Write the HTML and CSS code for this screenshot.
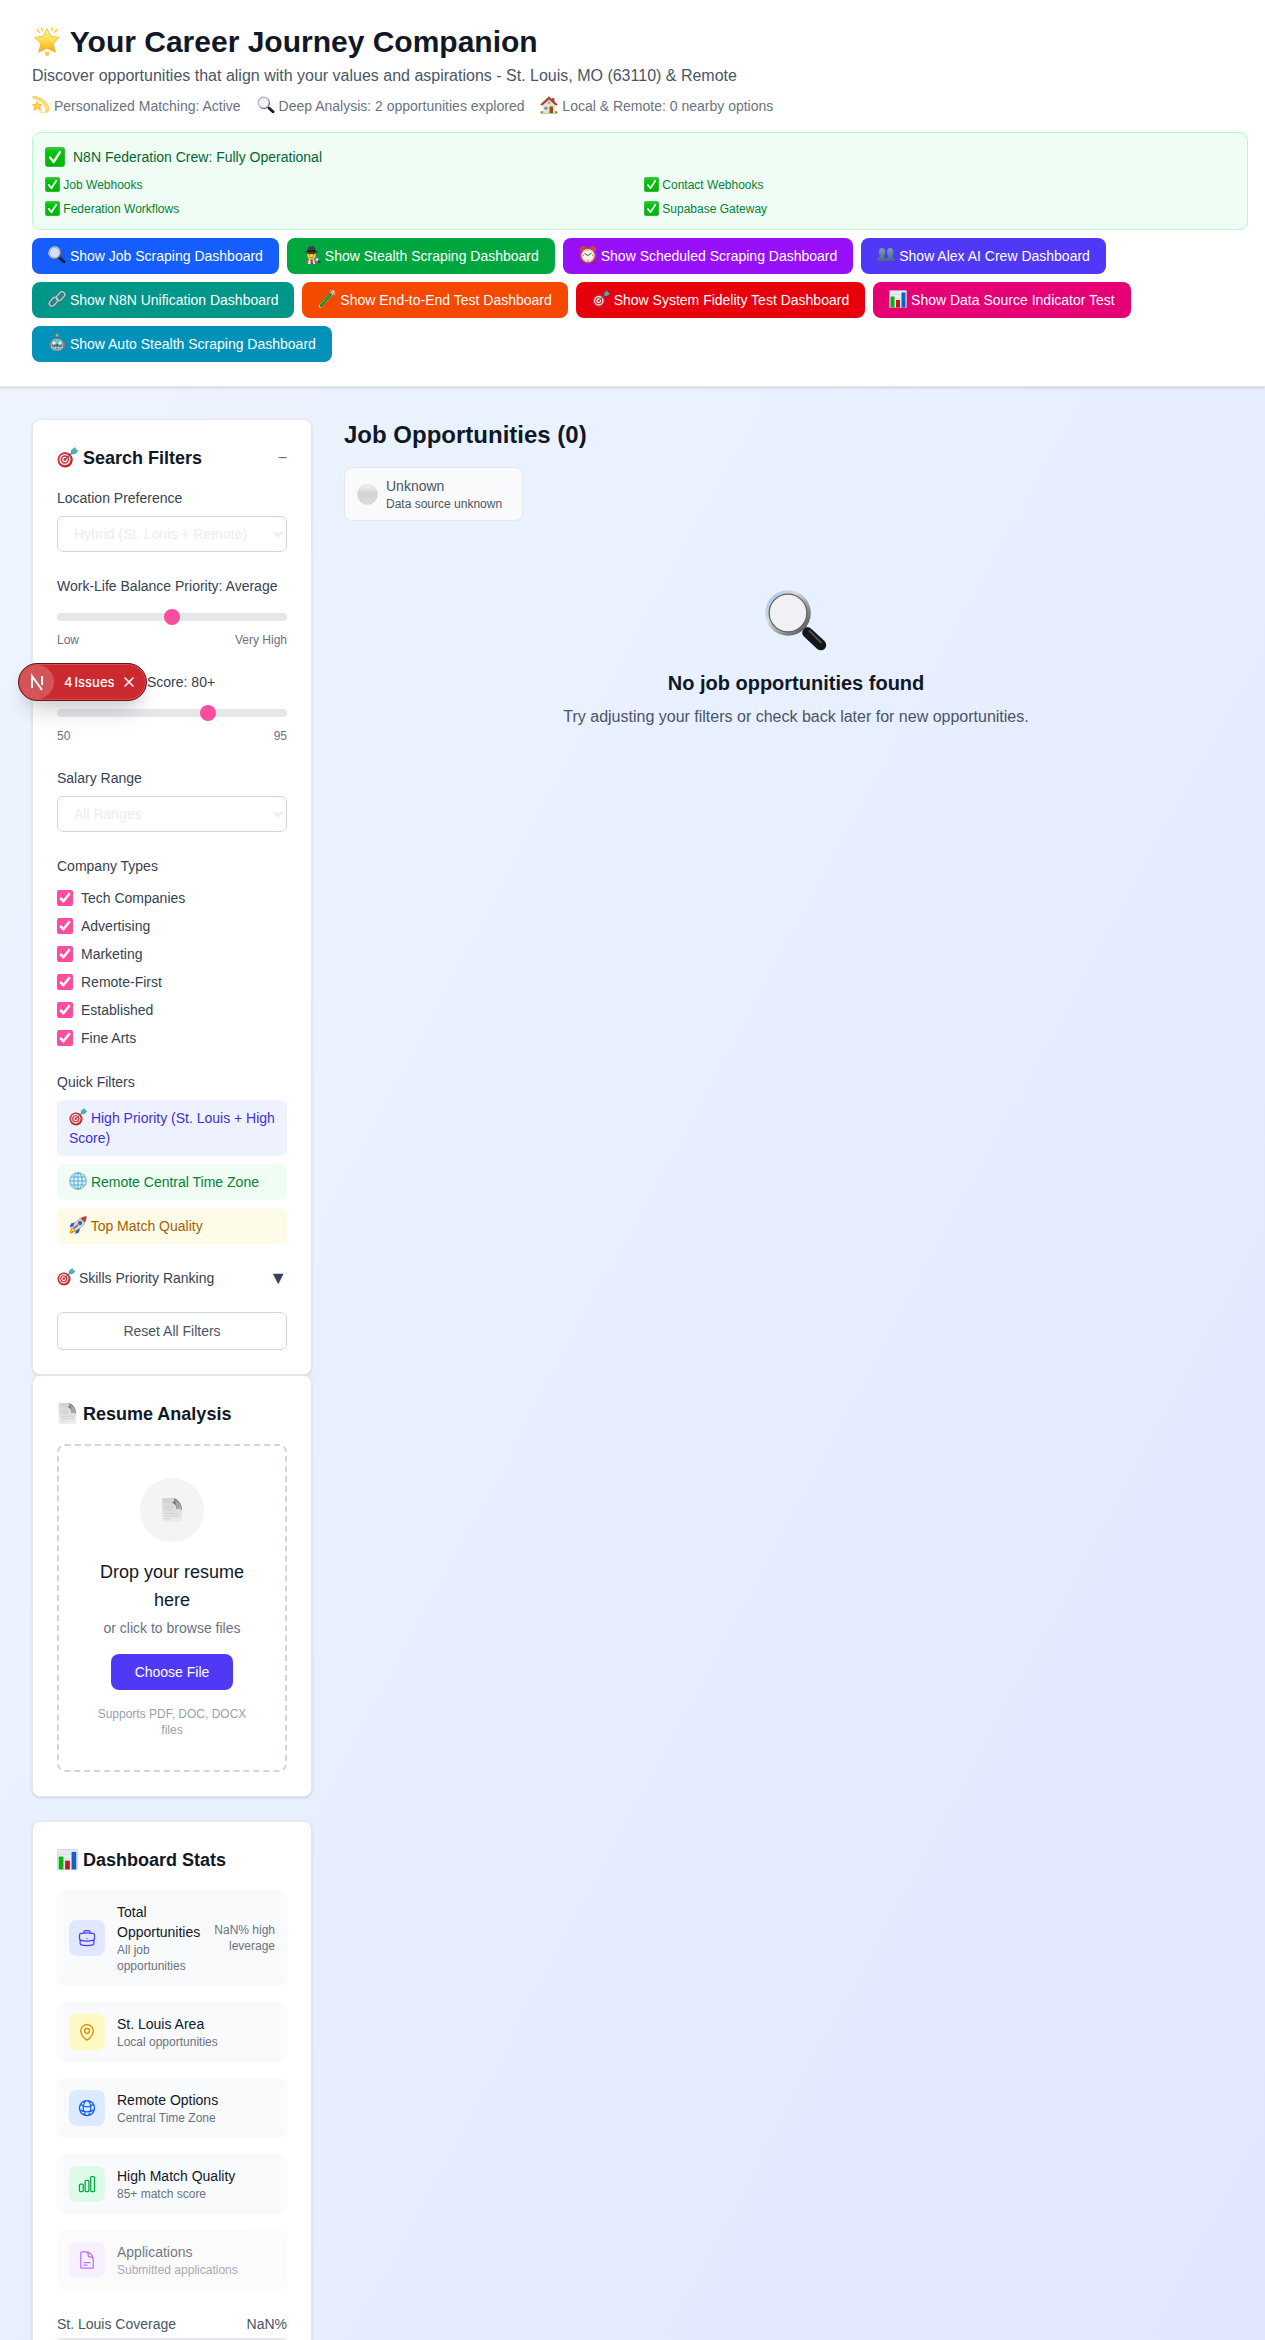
FILE: index.html
```html
<!DOCTYPE html>
<html lang="en">
<head>
<meta charset="utf-8">
<meta name="viewport" content="width=device-width, initial-scale=1">
<title>Your Career Journey Companion</title>
<link rel="stylesheet" href="styles.css">
</head>
<body>
<svg class="sprite" aria-hidden="true">
  <defs>
    <linearGradient id="g-star" x1="0" y1="0" x2="0" y2="1"><stop offset="0" stop-color="#fff3a0"/><stop offset=".5" stop-color="#ffdf4a"/><stop offset="1" stop-color="#f9a61f"/></linearGradient>
    <linearGradient id="g-green" x1="0" y1="0" x2="0" y2="1"><stop offset="0" stop-color="#37cf3c"/><stop offset=".25" stop-color="#00c40a"/><stop offset="1" stop-color="#00b40a"/></linearGradient>
    <linearGradient id="g-grey" x1="0" y1="0" x2="0" y2="1"><stop offset="0" stop-color="#f3f3f3"/><stop offset=".45" stop-color="#d3d3d3"/><stop offset="1" stop-color="#dcdcdc"/></linearGradient>
    <linearGradient id="g-rim" x1="0" y1="0" x2="1" y2="1"><stop offset="0" stop-color="#9cc4ea"/><stop offset=".35" stop-color="#d9dadd"/><stop offset="1" stop-color="#4a4a4a"/></linearGradient>
    <linearGradient id="g-page" x1="0" y1="0" x2="0" y2="1"><stop offset="0" stop-color="#d3d3d3"/><stop offset="1" stop-color="#ededed"/></linearGradient>
    <linearGradient id="g-people" x1="0" y1="0" x2="0" y2="1"><stop offset="0" stop-color="#7c9bb6"/><stop offset="1" stop-color="#4a6883"/></linearGradient>
    <symbol id="e-star" viewBox="0 0 36 36">
      <g fill="#ffd23c"><path d="M5 3q4 1 5 6Q6 8 5 3zM11 1q3 2 2 6Q10 5 11 1zM31 3q-4 1-5 6 4-1 5-6zM25 1q-3 2-2 6 3-2 2-6zM15 31h6l-1 4q-2 2-4 0z"/></g>
      <path d="M18 3l4.600 9.200L33 13.700l-7.500 7.300 2.500 10.500L18 26.600 8 31.500l2.500-10.500L3 13.700l10.400-1.500z" fill="url(#g-star)" stroke="#f5a623" stroke-width=".8" stroke-linejoin="round"/>
    </symbol>
    <symbol id="e-dizzy" viewBox="0 0 36 36">
      <path d="M1 1c16-1 32 12 33 24 0 5-2 8-5 8 2-9-8-26-28-32z" fill="#ffe07a" stroke="#efaa2a" stroke-width="1"/>
      <path d="M1 3c18 4 30 18 26 29-3 3-8 2-12 0 8-4 2-19-14-29z" fill="#fffbe9" stroke="#f3b93c"/>
      <path d="M10 11l3 6 6 0-4 5 2 6-7-3-6 4 1-7-4-5 7-1z" fill="#ffd23c" stroke="#e8981e"/>
    </symbol>
    <symbol id="e-magnify" viewBox="0 0 36 36">
      <path d="M21 21l3 2" stroke="#777" stroke-width="3"/>
      <path d="M24.500 24.500l7.500 7" stroke="#161718" stroke-width="6" stroke-linecap="round"/>
      <path d="M25.500 23.500l6.500 6.500" stroke="#55575a" stroke-width="1" stroke-linecap="round"/>
      <circle cx="13.500" cy="13.500" r="11.700" fill="#f0f0f3" fill-opacity=".88" stroke="url(#g-rim)" stroke-width="2.200"/>
      <circle cx="13.500" cy="13.500" r="10.600" fill="none" stroke="#5d6063" stroke-width=".7"/>
    </symbol>
    <symbol id="e-house" viewBox="0 0 36 36">
      <path d="M1 31q17-4 34 0v4H1z" fill="#6aa233"/>
      <path d="M6 16L18 5l12 11v18H6z" fill="#f4dfb6"/><path d="M24 4h5v9l-5-5z" fill="#a45d45"/>
      <path d="M18 1L1 17l3 2L18 7l14 12 3-2z" fill="#a9432f" stroke="#823021" stroke-width=".6"/>
      <path d="M19 21h7v13h-7z" fill="#8c4d2a"/><path d="M8 21h8v7H8z" fill="#5f9bc8" stroke="#fff"/><circle cx="18" cy="13.500" r="3" fill="#5f9bc8" stroke="#fff"/>
    </symbol>
    <symbol id="e-check" viewBox="0 0 36 36">
      <rect x=".7" y=".7" width="34.600" height="34.600" rx="5" fill="url(#g-green)" stroke="#20a32b" stroke-width="1.400"/>
      <path d="M9 19l6.500 8L27 9" fill="none" stroke="#fff" stroke-width="4.200" stroke-linecap="round" stroke-linejoin="round"/>
    </symbol>
    <symbol id="e-detective" viewBox="0 0 36 36">
      <path d="M5 36c0-9 5-11 12-11s12 2 12 11z" fill="#71726e"/><path d="M12 25l5 7 5-7 2 11H10z" fill="#e9e7df"/><path d="M16 28h3l1 8h-5z" fill="#a3382d"/>
      <ellipse cx="17" cy="18" rx="8.500" ry="9" fill="#ffcb32"/><path d="M9 13h16v3H9z" fill="#5a3a1c"/>
      <path d="M3 12c4 3 24 3 28 0-1-2-5-2-6-3-1-8-3-9-8-8-5-1-7 0-8 8-1 1-5 1-6 3z" fill="#3b3d40"/><path d="M9 8q8 3 16 0v3q-8 2-16 0z" fill="#15171a"/>
      <path d="M13 22q4 3 8 0" stroke="#8b4b14" fill="none" stroke-width="1.300"/><circle cx="13.500" cy="17.500" r="1.200" fill="#4b2b12"/><circle cx="20.500" cy="17.500" r="1.200" fill="#4b2b12"/>
      <circle cx="28" cy="27" r="4" fill="#bfe5f1" stroke="#596167" stroke-width="1.500"/><path d="M31 30l4 4" stroke="#26323a" stroke-width="2.500"/>
    </symbol>
    <symbol id="e-clock" viewBox="0 0 36 36">
      <path d="M7 31l-3 4M29 31l3 4" stroke="#9b2525" stroke-width="3" stroke-linecap="round"/><path d="M2 10a7 7 0 0 1 12-7zM34 10A7 7 0 0 0 22 3z" fill="#d8453f"/><path d="M15 2h6" stroke="#a33" stroke-width="2"/>
      <circle cx="18" cy="19" r="14.500" fill="#fff" stroke="#c8443f" stroke-width="2.600"/><circle cx="18" cy="19" r="12" fill="#f9f4e8" stroke="#8d8580" stroke-width="1"/>
      <path d="M18 19l-7-4M18 19l7-5" stroke="#222" stroke-width="1.600"/><path d="M18 9v2M18 27v2M8 19h2M26 19h2" stroke="#444" stroke-width="1.300"/>
    </symbol>
    <symbol id="e-people" viewBox="0 0 36 36">
      <g fill="url(#g-people)"><path d="M26 4c5 0 7 4 6.500 9-.5 4-2 6-2 8 0 3 5 3 5.500 9H17c0-6 5-6 5-9 0-2-2-4-2-8 0-5 2-9 6-9z"/><path d="M10 4c5 0 7 4 6.500 9-.5 4-2 6-2 8 0 3 5 3 5.500 9H0c0-6 5.500-6 5.500-9 0-2-2-4-2-8C3.500 8 5 4 10 4z" stroke="#4b5f9f" stroke-width=".8"/></g>
    </symbol>
    <symbol id="e-link" viewBox="0 0 36 36">
      <g fill="none" stroke-linecap="round"><g stroke="#59646b" stroke-width="4.600"><rect x="15" y="7" width="20" height="11" rx="5.500" transform="rotate(-48 25 12.500)"/><rect x="1" y="18" width="20" height="11" rx="5.500" transform="rotate(-48 11 23.500)"/></g><g stroke="#c4cdd2" stroke-width="2.600"><rect x="15" y="7" width="20" height="11" rx="5.500" transform="rotate(-48 25 12.500)"/><rect x="1" y="18" width="20" height="11" rx="5.500" transform="rotate(-48 11 23.500)"/></g></g>
    </symbol>
    <symbol id="e-tube" viewBox="0 0 36 36">
      <path d="M30 4L5 32" stroke="#dce8e6" stroke-width="6.500" stroke-linecap="round"/><path d="M25 9L6 31" stroke="#138a26" stroke-width="6" stroke-linecap="round"/><path d="M23 10L6 29" stroke="#45d24c" stroke-width="1.500"/><path d="M25 1l9 8" stroke="#b5a59c" stroke-width="2.500" stroke-linecap="round"/>
    </symbol>
    <symbol id="e-target" viewBox="0 0 36 36">
      <circle cx="14" cy="22" r="13" fill="#a82028"/><circle cx="13.500" cy="21.500" r="12" fill="#d8343b"/><circle cx="13.500" cy="21.500" r="9.500" fill="#f5eeee"/><circle cx="13.500" cy="21.500" r="7.200" fill="#cf2d35"/><circle cx="13.500" cy="21.500" r="4.800" fill="#f5eeee"/><circle cx="13.500" cy="21.500" r="2.500" fill="#cf2d35"/>
      <path d="M14 21L27 9" stroke="#48656e" stroke-width="2"/><path d="M24 11l1-6 6-4 1 4 4 1-4 5-6 1z" fill="#43b5bd" stroke="#2b7d8b" stroke-width=".8"/>
    </symbol>
    <symbol id="e-chart" viewBox="0 0 36 36">
      <path d="M1 1h34v34H1z" fill="#e4edf2" stroke="#b8c4cb"/><path d="M1 9h34M1 17h34M1 26h34" stroke="#cbd6dd"/><path d="M3 13h8v22H3z" fill="#08b20c"/><path d="M14 20h8v15h-8z" fill="#c5141b"/><path d="M25 5h8v30h-8z" fill="#1260c3"/>
    </symbol>
    <symbol id="e-robot" viewBox="0 0 36 36">
      <circle cx="18" cy="3" r="2.800" fill="#f2a12d"/><path d="M17 5h2v5h-2z" fill="#7f4940"/><path d="M2 17h5v9H2zM29 17h5v9h-5z" fill="#e0564b"/><path d="M6 15C8 7 28 7 30 15l1 12c-2 9-24 9-26 0z" fill="#9db6be" stroke="#55707a"/>
      <path d="M8 20c0 13 20 13 20 0z" fill="#506b75"/><circle cx="12" cy="18" r="4.200" fill="#e8ffff" stroke="#35a6bd" stroke-width="1.500"/><circle cx="24" cy="18" r="4.200" fill="#e8ffff" stroke="#35a6bd" stroke-width="1.500"/><path d="M11 27h14" stroke="#e9eded" stroke-width="3" stroke-dasharray="2 1"/>
    </symbol>
    <symbol id="e-globe" viewBox="0 0 36 36">
      <circle cx="18" cy="18" r="16.500" fill="#d9f1fb"/><g fill="none" stroke="#4a9fc9" stroke-width="1.700"><circle cx="18" cy="18" r="16.500"/><ellipse cx="18" cy="18" rx="8.500" ry="16.500"/><path d="M18 1.500v33M1.500 18h33M4 10h28M4 26h28"/></g>
    </symbol>
    <symbol id="e-rocket" viewBox="0 0 36 36">
      <path d="M1 34l4-12 9 9-10 4z" fill="#f98a18"/><path d="M4 31l4-8 5 5z" fill="#ffe14d"/><path d="M12 13l-8 2-3 8 9-3zM22 24l-2 9-8 3 3-9z" fill="#2767b8"/>
      <path d="M35 1C23 1 11 11 7 23l6 6C25 25 35 14 35 1z" fill="#d3dbe2" stroke="#5f6b75" stroke-width=".8"/><path d="M35 1q-8 0-12 4l8 8q4-6 4-12z" fill="#c63b3b"/><circle cx="22" cy="14" r="3.500" fill="#2f6fb5" stroke="#1d3957" stroke-width="1.200"/><path d="M9 25l9-7" stroke="#a33" stroke-width="2.500"/>
    </symbol>
    <symbol id="e-page" viewBox="0 0 36 36">
      <path d="M3 0h18q12 5 12 17v19H3z" fill="url(#g-page)"/><path d="M21 0q11 5 12 18-4-3-8-1 0-8-7-10 5-2 3-7z" fill="#757575"/><path d="M19 1q6 3 6 15l8 1Q31 6 19 1z" fill="#a9a9a9"/><path d="M7 6h8M7 14h12M7 18h12M7 23h22M7 27h22M7 31h8" stroke="#c4c4c4"/>
    </symbol>
    <symbol id="e-circle" viewBox="0 0 36 36"><circle cx="18" cy="18" r="17" fill="url(#g-grey)" stroke="#cfcfcf"/></symbol>
  </defs>
</svg>

<div class="app">
  <header class="header">
    <h1 class="header__title"><svg class="emoji emoji--xl" aria-hidden="true"><use href="#e-star"/></svg> Your Career Journey Companion</h1>
    <p class="header__lead">Discover opportunities that align with your values and aspirations - St. Louis, MO (63110) &amp; Remote</p>
    <div class="facts">
      <span><svg class="emoji" aria-hidden="true"><use href="#e-dizzy"/></svg> Personalized Matching: Active</span>
      <span><svg class="emoji" aria-hidden="true"><use href="#e-magnify"/></svg> Deep Analysis: 2 opportunities explored</span>
      <span><svg class="emoji" aria-hidden="true"><use href="#e-house"/></svg> Local &amp; Remote: 0 nearby options</span>
    </div>
    <section class="status">
      <div class="status__head"><svg class="emoji emoji--status" aria-hidden="true"><use href="#e-check"/></svg><span>N8N Federation Crew: Fully Operational</span></div>
      <div class="status__grid">
        <div><svg class="emoji emoji--sm" aria-hidden="true"><use href="#e-check"/></svg> Job Webhooks</div>
        <div><svg class="emoji emoji--sm" aria-hidden="true"><use href="#e-check"/></svg> Contact Webhooks</div>
        <div><svg class="emoji emoji--sm" aria-hidden="true"><use href="#e-check"/></svg> Federation Workflows</div>
        <div><svg class="emoji emoji--sm" aria-hidden="true"><use href="#e-check"/></svg> Supabase Gateway</div>
      </div>
    </section>
    <div class="actions">
      <button type="button" class="btn btn--blue"><svg class="emoji" aria-hidden="true"><use href="#e-magnify"/></svg> Show Job Scraping Dashboard</button>
      <button type="button" class="btn btn--green"><svg class="emoji" aria-hidden="true"><use href="#e-detective"/></svg> Show Stealth Scraping Dashboard</button>
      <button type="button" class="btn btn--purple"><svg class="emoji" aria-hidden="true"><use href="#e-clock"/></svg> Show Scheduled Scraping Dashboard</button>
      <button type="button" class="btn btn--indigo"><svg class="emoji" aria-hidden="true"><use href="#e-people"/></svg> Show Alex AI Crew Dashboard</button>
      <button type="button" class="btn btn--teal"><svg class="emoji" aria-hidden="true"><use href="#e-link"/></svg> Show N8N Unification Dashboard</button>
      <button type="button" class="btn btn--orange"><svg class="emoji" aria-hidden="true"><use href="#e-tube"/></svg> Show End-to-End Test Dashboard</button>
      <button type="button" class="btn btn--red"><svg class="emoji" aria-hidden="true"><use href="#e-target"/></svg> Show System Fidelity Test Dashboard</button>
      <button type="button" class="btn btn--pink"><svg class="emoji" aria-hidden="true"><use href="#e-chart"/></svg> Show Data Source Indicator Test</button>
      <button type="button" class="btn btn--cyan"><svg class="emoji" aria-hidden="true"><use href="#e-robot"/></svg> Show Auto Stealth Scraping Dashboard</button>
    </div>
  </header>

  <div class="layout">
    <aside class="sidebar">
      <section class="card filters">
        <div class="card__head">
          <h2 class="card__title"><svg class="emoji emoji--lg" aria-hidden="true"><use href="#e-target"/></svg> Search Filters</h2>
          <button type="button" class="collapse" aria-label="Collapse filters">−</button>
        </div>
        <div class="field">
          <label for="location">Location Preference</label>
          <select id="location"><option>Hybrid (St. Louis + Remote)</option></select>
        </div>
        <div class="field">
          <label for="balance">Work-Life Balance Priority: Average</label>
          <input id="balance" type="range" min="1" max="5" value="3">
          <div class="scale"><span>Low</span><span>Very High</span></div>
        </div>
        <div class="field">
          <label for="score" class="field__label--beside-badge">Score: 80+</label>
          <input id="score" type="range" min="50" max="95" step="5" value="80">
          <div class="scale"><span>50</span><span>95</span></div>
        </div>
        <div class="field">
          <label for="salary">Salary Range</label>
          <select id="salary"><option>All Ranges</option></select>
        </div>
        <fieldset class="types">
          <legend>Company Types</legend>
          <label><input type="checkbox" checked> Tech Companies</label>
          <label><input type="checkbox" checked> Advertising</label>
          <label><input type="checkbox" checked> Marketing</label>
          <label><input type="checkbox" checked> Remote-First</label>
          <label><input type="checkbox" checked> Established</label>
          <label><input type="checkbox" checked> Fine Arts</label>
        </fieldset>
        <div class="quick">
          <h3 class="quick__title">Quick Filters</h3>
          <button type="button" class="quick__btn quick__btn--indigo"><svg class="emoji" aria-hidden="true"><use href="#e-target"/></svg> High Priority (St. Louis + High Score)</button>
          <button type="button" class="quick__btn quick__btn--green"><svg class="emoji" aria-hidden="true"><use href="#e-globe"/></svg> Remote Central Time Zone</button>
          <button type="button" class="quick__btn quick__btn--yellow"><svg class="emoji" aria-hidden="true"><use href="#e-rocket"/></svg> Top Match Quality</button>
        </div>
        <button type="button" class="skills"><span><svg class="emoji" aria-hidden="true"><use href="#e-target"/></svg> Skills Priority Ranking</span><span class="skills__arrow">▼</span></button>
        <button type="button" class="reset">Reset All Filters</button>
      </section>

      <section class="card">
        <h2 class="card__title"><svg class="emoji emoji--lg" aria-hidden="true"><use href="#e-page"/></svg> Resume Analysis</h2>
        <div class="drop">
          <div class="drop__icon"><svg class="emoji emoji--drop" aria-hidden="true"><use href="#e-page"/></svg></div>
          <p class="drop__title">Drop your resume here</p>
          <p class="drop__text">or click to browse files</p>
          <button type="button" class="btn btn--indigo btn--file">Choose File</button>
          <p class="drop__note">Supports PDF, DOC, DOCX files</p>
        </div>
      </section>

      <section class="card card--stats">
        <h2 class="card__title"><svg class="emoji emoji--lg" aria-hidden="true"><use href="#e-chart"/></svg> Dashboard Stats</h2>
        <ul class="stats">
          <li class="stat">
            <span class="stat__icon stat__icon--indigo"><svg viewBox="0 0 24 24"><path d="M20.250 14.150v4.250c0 1.094-.787 2.036-1.872 2.180-2.087.277-4.216.42-6.378.42s-4.291-.143-6.378-.42c-1.085-.144-1.872-1.086-1.872-2.180v-4.250m16.500 0a2.180 2.180 0 0 0 .75-1.661V8.706c0-1.081-.768-2.015-1.837-2.175a48.114 48.114 0 0 0-3.413-.387m4.500 8.006c-.194.165-.42.295-.673.38A23.978 23.978 0 0 1 12 15.750c-2.648 0-5.195-.429-7.577-1.220a2.016 2.016 0 0 1-.673-.38m0 0A2.180 2.180 0 0 1 3 12.489V8.706c0-1.081.768-2.015 1.837-2.175a48.111 48.111 0 0 1 3.413-.387m7.500 0V5.250A2.250 2.250 0 0 0 13.500 3h-3a2.250 2.250 0 0 0-2.250 2.250v.894m7.500 0a48.667 48.667 0 0 0-7.500 0M12 12.750h.008v.008H12v-.008Z"/></svg></span>
            <div><p class="stat__name">Total Opportunities</p><p class="stat__sub">All job opportunities</p></div>
            <p class="stat__extra">NaN% high leverage</p>
          </li>
          <li class="stat">
            <span class="stat__icon stat__icon--yellow"><svg viewBox="0 0 24 24"><path d="M15 10.500a3 3 0 1 1-6 0 3 3 0 0 1 6 0Z"/><path d="M19.500 10.500c0 7.142-7.500 11.250-7.500 11.250S4.500 17.642 4.500 10.500a7.500 7.500 0 1 1 15 0Z"/></svg></span>
            <div><p class="stat__name">St. Louis Area</p><p class="stat__sub">Local opportunities</p></div>
          </li>
          <li class="stat">
            <span class="stat__icon stat__icon--blue"><svg viewBox="0 0 24 24"><path d="M12 21a9.004 9.004 0 0 0 8.716-6.747M12 21a9.004 9.004 0 0 1-8.716-6.747M12 21c2.485 0 4.500-4.030 4.500-9S14.485 3 12 3m0 18c-2.485 0-4.500-4.030-4.500-9S9.515 3 12 3m0 0a8.997 8.997 0 0 1 7.843 4.582M12 3a8.997 8.997 0 0 0-7.843 4.582m15.686 0A11.953 11.953 0 0 1 12 10.500c-2.998 0-5.740-1.100-7.843-2.918m15.686 0A8.959 8.959 0 0 1 21 12c0 .778-.099 1.533-.284 2.253m0 0A17.919 17.919 0 0 1 12 16.500c-3.162 0-6.133-.815-8.716-2.247m0 0A9.015 9.015 0 0 1 3 12c0-1.605.42-3.113 1.157-4.418"/></svg></span>
            <div><p class="stat__name">Remote Options</p><p class="stat__sub">Central Time Zone</p></div>
          </li>
          <li class="stat">
            <span class="stat__icon stat__icon--green"><svg viewBox="0 0 24 24"><path d="M3 13.125C3 12.504 3.504 12 4.125 12h2.250c.621 0 1.125.504 1.125 1.125v6.750C7.500 20.496 6.996 21 6.375 21h-2.250A1.125 1.125 0 0 1 3 19.875v-6.750ZM9.750 8.625c0-.621.504-1.125 1.125-1.125h2.250c.621 0 1.125.504 1.125 1.125v11.250c0 .621-.504 1.125-1.125 1.125h-2.250a1.125 1.125 0 0 1-1.125-1.125V8.625ZM16.500 4.125c0-.621.504-1.125 1.125-1.125h2.250C20.496 3 21 3.504 21 4.125v15.750c0 .621-.504 1.125-1.125 1.125h-2.250a1.125 1.125 0 0 1-1.125-1.125V4.125Z"/></svg></span>
            <div><p class="stat__name">High Match Quality</p><p class="stat__sub">85+ match score</p></div>
          </li>
          <li class="stat stat--entering">
            <span class="stat__icon stat__icon--purple"><svg viewBox="0 0 24 24"><path d="M19.500 14.250v-2.625a3.375 3.375 0 0 0-3.375-3.375h-1.500A1.125 1.125 0 0 1 13.500 7.125v-1.500a3.375 3.375 0 0 0-3.375-3.375H8.250m0 12.750h7.500m-7.500 3H12M10.500 2.250H5.625c-.621 0-1.125.504-1.125 1.125v17.250c0 .621.504 1.125 1.125 1.125h12.750c.621 0 1.125-.504 1.125-1.125V11.250a9 9 0 0 0-9-9Z"/></svg></span>
            <div><p class="stat__name">Applications</p><p class="stat__sub">Submitted applications</p></div>
          </li>
        </ul>
        <div class="coverage">
          <div class="coverage__row"><span>St. Louis Coverage</span><span>NaN%</span></div>
          <div class="coverage__bar"></div>
        </div>
      </section>
    </aside>

    <main class="main">
      <h2 class="main__title">Job Opportunities (0)</h2>
      <div class="source">
        <svg class="emoji emoji--source" aria-hidden="true"><use href="#e-circle"/></svg>
        <div><p class="source__name">Unknown</p><p class="source__text">Data source unknown</p></div>
      </div>
      <section class="empty">
        <svg class="emoji emoji--empty" aria-hidden="true"><use href="#e-magnify"/></svg>
        <h3 class="empty__title">No job opportunities found</h3>
        <p class="empty__text">Try adjusting your filters or check back later for new opportunities.</p>
      </section>
    </main>
  </div>

  <div class="issues">
    <span class="issues__logo"><svg viewBox="0 0 34 34" aria-hidden="true"><path d="M12 23V11L22 25M22 11v9" fill="none" stroke="#fff" stroke-width="2"/></svg></span>
    <button type="button" class="issues__open"><span>4</span><span>Issues</span></button>
    <button type="button" class="issues__close" aria-label="Dismiss"><svg viewBox="0 0 12 12" aria-hidden="true"><path d="M2 2l8 8M10 2l-8 8" stroke="#fff" stroke-width="1.500" stroke-linecap="round"/></svg></button>
  </div>
</div>
</body>
</html>
```
FILE: styles.css
```css
*, *::before, *::after { box-sizing: border-box; }
body, h1, h2, h3, p, ul, fieldset { margin: 0; padding: 0; }
body {
  font-family: "Liberation Sans", Arial, Helvetica, sans-serif;
  font-size: 14px;
  line-height: 20px;
  color: #101828;
}
button, select, input { font: inherit; color: inherit; margin: 0; }
button { border: 0; background: none; padding: 0; cursor: pointer; }
.sprite { position: absolute; width: 0; height: 0; }

.emoji { width: 18px; height: 18px; vertical-align: -3px; flex: none; }
.emoji--sm { width: 15px; height: 15px; }
.emoji--status { width: 20px; height: 20px; }
.emoji--source { width: 21px; height: 21px; }
.emoji--lg { width: 21px; height: 21px; vertical-align: -4px; }
.emoji--drop { width: 24px; height: 24px; }
.emoji--xl { width: 30px; height: 30px; vertical-align: -4px; }
.emoji--empty { width: 64px; height: 64px; }

.app {
  position: relative;
  height: 100vh;
  overflow: hidden;
  background: linear-gradient(to bottom right, #eff6ff, #e0e7ff);
}

/* Header */
.header {
  padding: 24px 17px 24px 32px;
  background: #fff;
  border-bottom: 1px solid #e5e7eb;
  box-shadow: 0 1px 3px rgba(0, 0, 0, .1), 0 1px 2px -1px rgba(0, 0, 0, .1);
}
.header__title { font-size: 30px; line-height: 36px; }
.header__lead { margin-top: 4px; font-size: 16px; line-height: 24px; color: #4a5565; }
.facts { display: flex; flex-wrap: wrap; gap: 16px; margin-top: 8px; color: #6a7282; }

.status {
  margin-top: 16px;
  padding: 12px;
  border: 1px solid #b9f8cf;
  border-radius: 8px;
  background: #f0fdf4;
}
.status__head { display: flex; align-items: center; gap: 8px; height: 24px; margin-bottom: 8px; color: #016630; }
.status__grid { display: grid; grid-template-columns: 1fr 1fr; gap: 8px; font-size: 12px; line-height: 16px; color: #008236; }
.status__grid div { height: 16px; }

.actions { display: flex; flex-wrap: wrap; gap: 8px; margin-top: 8px; }
.btn { height: 36px; padding: 0 16px; border-radius: 8px; color: #fff; white-space: nowrap; }
.btn--blue { background: #155dfc; }
.btn--green { background: #00a63e; }
.btn--purple { background: #9810fa; }
.btn--indigo { background: #4f39f6; }
.btn--teal { background: #009689; }
.btn--orange { background: #f54900; }
.btn--red { background: #e7000b; }
.btn--pink { background: #e60076; }
.btn--cyan { background: #0092b8; }
.btn--file { padding: 0 24px; }

/* Page columns */
.layout {
  display: grid;
  grid-template-columns: 280px minmax(0, 1fr);
  gap: 32px;
  padding: 32px 17px 32px 32px;
}
.card {
  padding: 24px;
  background: #fff;
  border: 1px solid #e5e7eb;
  border-radius: 8px;
  box-shadow: 0 1px 3px rgba(0, 0, 0, .1), 0 1px 2px -1px rgba(0, 0, 0, .1);
}
.card--stats { margin-top: 24px; }
.card__head { display: flex; justify-content: space-between; align-items: center; }
.card__title { font-size: 18px; line-height: 28px; height: 28px; }
.collapse { font-size: 16px; line-height: 24px; color: #6a7282; }

/* Filters */
.filters { display: flex; flex-direction: column; gap: 24px; }
.filters .card__head { margin-bottom: -8px; }
.field { color: #364153; }
.field label { display: block; }
.field .field__label--beside-badge { padding-left: 90px; }
.field select {
  display: block;
  width: 100%;
  height: 36px;
  margin-top: 8px;
  padding: 0 12px;
  border: 1px solid #d1d5dc;
  border-radius: 6px;
  background-color: #fff;
  color: #ededed;
}
.field input {
  display: block;
  width: 100%;
  height: 8px;
  margin: 17px 0 11px;
  border-radius: 8px;
  background: #e5e7eb;
  appearance: none;
}
.field input::-webkit-slider-thumb {
  width: 16px;
  height: 16px;
  border-radius: 50%;
  background: #fb4d9d;
  appearance: none;
}
.scale { display: flex; justify-content: space-between; font-size: 12px; line-height: 16px; color: #6a7282; }
.types { display: flex; flex-direction: column; gap: 8px; border: 0; color: #364153; }
.types legend { padding: 0; margin-bottom: 12px; }
.types label { display: flex; align-items: center; gap: 8px; }
.types input { width: 16px; height: 16px; accent-color: #fb4d9d; }
.quick { display: flex; flex-direction: column; gap: 8px; }
.quick__title { font-size: 14px; font-weight: 400; color: #364153; }
.quick__btn { padding: 8px 12px; border-radius: 6px; text-align: left; }
.quick__btn--indigo { background: #eef2ff; color: #432dd7; }
.quick__btn--green { background: #f0fdf4; color: #008236; }
.quick__btn--yellow { background: #fefce8; color: #a65f00; }
.skills { display: flex; justify-content: space-between; height: 20px; color: #364153; }
.skills__arrow { font-size: 18px; }
.reset { height: 38px; border: 1px solid #d1d5dc; border-radius: 6px; color: #4a5565; }

/* Resume upload */
.drop {
  display: flex;
  flex-direction: column;
  align-items: center;
  margin-top: 16px;
  padding: 32px;
  border: 2px dashed #d1d5dc;
  border-radius: 8px;
  text-align: center;
}
.drop__icon { display: grid; place-items: center; width: 64px; height: 64px; margin-bottom: 16px; border-radius: 50%; background: #f3f4f6; }
.drop__title { font-size: 18px; line-height: 28px; }
.drop__text { margin: 4px 0 16px; color: #6a7282; }
.drop__note { margin-top: 16px; font-size: 12px; line-height: 16px; color: #99a1af; }

/* Stats */
.stats { display: flex; flex-direction: column; gap: 16px; margin-top: 16px; list-style: none; }
.stat { display: flex; align-items: center; gap: 12px; padding: 12px; border-radius: 8px; background: #f9fafb; }
.stat--entering { opacity: .6; }
.stat__icon { display: grid; place-items: center; flex: none; width: 36px; height: 36px; border-radius: 8px; }
.stat__icon svg { width: 20px; height: 20px; fill: none; stroke: currentColor; stroke-width: 1.5; stroke-linecap: round; stroke-linejoin: round; }
.stat__icon--indigo { background: #e0e7ff; color: #4f39f6; }
.stat__icon--yellow { background: #fef9c2; color: #d08700; }
.stat__icon--blue { background: #dbeafe; color: #155dfc; }
.stat__icon--green { background: #dcfce7; color: #00a63e; }
.stat__icon--purple { background: #f3e8ff; color: #9810fa; }
.stat__sub { font-size: 12px; line-height: 16px; color: #6a7282; }
.stat__extra { flex: none; width: 62px; margin-left: auto; font-size: 12px; line-height: 16px; text-align: right; color: #6a7282; }
.coverage { margin-top: 24px; }
.coverage__row { display: flex; justify-content: space-between; margin-bottom: 4px; color: #4a5565; }
.coverage__bar { height: 8px; border-radius: 4px; background: #e5e7eb; }

/* Results */
.main__title { font-size: 24px; line-height: 32px; }
.source {
  display: inline-flex;
  align-items: center;
  gap: 8px;
  margin-top: 16px;
  padding: 8px 20px 8px 12px;
  border: 1px solid #e5e7eb;
  border-radius: 8px;
  background: #f9fafb;
  color: #4a5565;
}
.source__text { font-size: 12px; line-height: 16px; }
.empty { display: flex; flex-direction: column; align-items: center; margin-top: 20px; padding: 48px 0; text-align: center; }
.empty__title { margin-top: 16px; font-size: 20px; line-height: 28px; }
.empty__text { margin-top: 8px; font-size: 16px; line-height: 24px; color: #4a5565; }

/* Floating issue indicator */
.issues {
  position: absolute;
  left: 18px;
  top: 663px;
  display: flex;
  align-items: center;
  height: 38px;
  padding: 0 11px 0 1px;
  border: 1px solid #5b1a1d;
  border-radius: 19px;
  background: #ca2a30;
  box-shadow: inset 0 0 0 1px #e5484d, 0 16px 24px -8px rgba(0, 0, 0, .2), 0 4px 8px rgba(0, 0, 0, .06);
  color: #fff;
  font: 500 13px/16px Inter, sans-serif;
}
.issues__logo { width: 34px; height: 34px; border-radius: 50%; background: rgba(255, 255, 255, .2); }
.issues__open { display: flex; gap: 2px; margin-left: 10px; }
.issues__close { display: flex; margin-left: 8px; }
.issues__close svg { width: 12px; height: 12px; }
```
